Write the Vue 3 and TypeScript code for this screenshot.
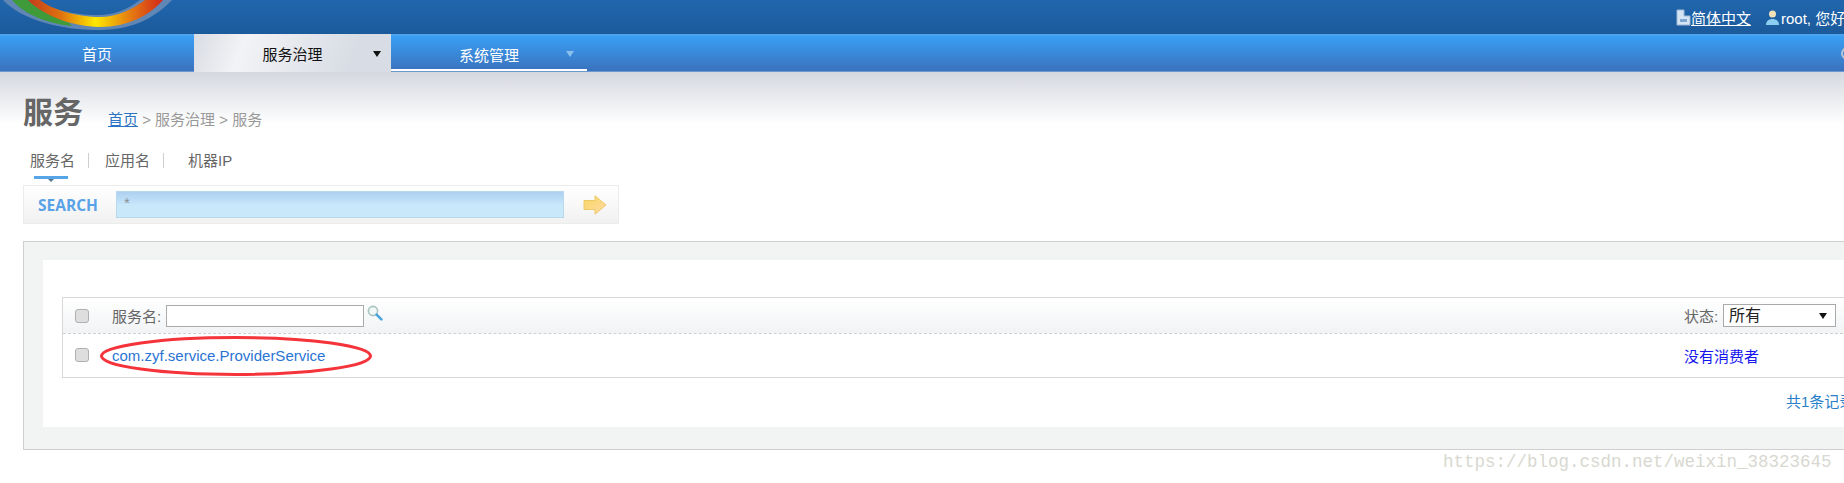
<template>
  <div class="page">
    <header class="top">
      <svg class="logo" width="180" height="32" viewBox="0 0 180 32">
        <defs>
          <linearGradient id="ringGrad" x1="0" x2="1" y1="0" y2="0">
            <stop offset="0" stop-color="#c23a1c" />
            <stop offset="0.25" stop-color="#e0740f" />
            <stop offset="0.5" stop-color="#fde800" />
            <stop offset="0.72" stop-color="#e88a10" />
            <stop offset="1" stop-color="#d2261a" />
          </linearGradient>
        </defs>
        <path d="M3 0C22 20 60 30 100 30C135 30 158 15 172 0H140C128 9 115 15 98 15C72 15 50 9 38 0Z" fill="#5f86b5" />
        <path d="M12 0C26 16 50 24 72 26L66 19C50 14 36 8 28 0Z" fill="#3f9a3a" />
        <path d="M28 0C40 13 70 27 100 27C128 27 150 15 163 0H145C132 10 116 17 100 17C78 17 52 10 40 0Z" fill="url(#ringGrad)" />
      </svg>
      <div class="top-links">
        <svg class="mini" width="15" height="17" viewBox="0 0 15 17">
          <path d="M1 1H8V7H14V16H1Z" fill="#d5e4f3" stroke="#9db9d8" />
          <path d="M4 10H11V13H4Z" fill="#7fa6d0" />
        </svg>
        <a class="lang">简体中文</a>
        <svg class="mini user" width="15" height="17" viewBox="0 0 15 17">
          <path d="M1 16C1 12 4 10 7.5 10S14 12 14 16Z" fill="#8ccdf2" />
          <circle cx="7.5" cy="5" r="3.5" fill="#f3e2b8" />
        </svg>
        <span>root, 您好</span>
      </div>
    </header>

    <nav class="nav">
      <a class="nav-item">首页</a>
      <a class="nav-item active">服务治理<i class="arrow"></i></a>
      <a class="nav-item system">系统管理<i class="arrow"></i></a>
      <span class="nav-dot"></span>
    </nav>

    <main class="content">
      <div class="title-row">
        <h1>服务</h1>
        <div class="crumbs"><a>首页</a> &gt; 服务治理 &gt; 服务</div>
      </div>

      <div class="tabs">
        <span class="tab current">服务名</span>
        <span class="sep"></span>
        <span class="tab">应用名</span>
        <span class="sep"></span>
        <span class="tab last">机器IP</span>
      </div>

      <div class="search">
        <span class="search-label">SEARCH</span>
        <div class="search-input">*</div>
        <svg class="go" width="24" height="20" viewBox="0 0 24 20">
          <defs>
            <linearGradient id="goGrad" x1="0" x2="0.8" y1="0" y2="1">
              <stop offset="0" stop-color="#f8d860" />
              <stop offset="1" stop-color="#ffd9a0" />
            </linearGradient>
          </defs>
          <path d="M1 5.5H12V0.8L23 10L12 19.2V14.5H1Z" fill="url(#goGrad)" stroke="#efc86a" />
        </svg>
      </div>

      <section class="panel">
        <div class="panel-inner">
          <div class="grid">
            <div class="row head">
              <span class="check"></span>
              <div class="cell-name">
                <label>服务名:</label>
                <span class="filter"></span>
                <svg class="lens" width="16" height="16" viewBox="0 0 16 16">
                  <circle cx="6" cy="6" r="4.6" fill="#f2f7f7" stroke="#a9c4c0" stroke-width="1.6" />
                  <path d="M9.6 9.6L14.4 14.4" stroke="#4aa5dc" stroke-width="2.6" stroke-linecap="round" />
                </svg>
              </div>
              <div class="cell-state">
                <label>状态:</label>
                <div class="select">所有<i class="select-arrow"></i></div>
              </div>
            </div>
            <div class="row body">
              <span class="check"></span>
              <div class="cell-name">
                <a class="service">com.zyf.service.ProviderService</a>
                <svg class="mark" width="274" height="42" viewBox="0 0 274 42">
                  <ellipse cx="137" cy="21" rx="134.5" ry="18.5" fill="none" stroke="#f5333a" stroke-width="3" />
                </svg>
              </div>
              <div class="cell-state"><a class="none">没有消费者</a></div>
            </div>
          </div>
          <div class="pager">共1条记录</div>
        </div>
      </section>
    </main>
    <div class="watermark">https://blog.csdn.net/weixin_38323645</div>
  </div>
</template>

<script setup lang="ts">
</script>

<style>
html,
body {
  margin: 0;
  overflow: hidden;
  background: #fff;
}
</style>

<style scoped>
.page {
  position: relative;
  width: 1900px;
  height: 483px;
  overflow: hidden;
  font-family: "Liberation Sans", "Noto Sans CJK SC", sans-serif;
  font-size: 15px;
  color: #666;
}

.top {
  position: relative;
  height: 34px;
  background: linear-gradient(#2166ad, #1b5a9b);
  color: #fff;
}

.logo {
  position: absolute;
  left: 0;
  top: 0;
}

.top-links {
  display: flex;
  align-items: center;
  height: 34px;
  padding-left: 1676px;
  white-space: nowrap;
}

.mini {
  flex: none;
}

.lang {
  width: 60px;
  text-decoration: underline;
}

.user {
  margin-left: 14px;
  margin-right: 1px;
}

.nav {
  position: relative;
  display: flex;
  height: 38px;
  box-sizing: border-box;
  border-top: 2px solid #4ba3ef;
  border-bottom: 1px solid #6d97cf;
  background: linear-gradient(#3a9ff5, #3a72bd);
  color: #fff;
}

.nav-item {
  position: relative;
  width: 197px;
  height: 37px;
  line-height: 37px;
  text-align: center;
  box-sizing: border-box;
}

.nav-item:first-child {
  width: 194px;
}

.nav-item.active {
  margin-top: -2px;
  height: 38px;
  line-height: 41px;
  background: linear-gradient(110deg, #d9dce3, #f2f3f6 25%, #d8dce4 80%);
  color: #111;
}

.nav-item.system {
  width: 196px;
  line-height: 39px;
  height: 35px;
  border-bottom: 2px solid #fff;
}

.arrow {
  position: absolute;
  left: 179px;
  top: 17px;
  border: 4px solid transparent;
  border-top: 6px solid #111;
  border-bottom: 0;
}

.system .arrow {
  left: 175px;
  top: 15px;
  border-top-color: #8cc0ee;
}

.nav-dot {
  position: absolute;
  left: 1841px;
  top: 11px;
  width: 9px;
  height: 9px;
  border: 2px solid #b7c4d3;
  border-radius: 50%;
}

.content {
  padding: 0 0 0 23px;
  background: linear-gradient(#d5d8df, #fff 52px) no-repeat;
}

.title-row {
  display: flex;
  align-items: flex-end;
  height: 60px;
}

h1 {
  margin: 0;
  width: 85px;
  font-size: 30px;
  line-height: 38px;
  color: #666;
}

.crumbs {
  line-height: 24px;
  color: #999;
}

.crumbs a {
  color: #2a74c4;
  text-decoration: underline;
}

.tabs {
  display: flex;
  align-items: center;
  height: 53px;
  padding: 0 0 0 7px;
  box-sizing: border-box;
  color: #666;
}

.tab {
  position: relative;
  width: 46px;
  height: 53px;
  line-height: 58px;
  white-space: nowrap;
}

.tab.current::after {
  content: "";
  position: absolute;
  left: 4px;
  top: 44px;
  width: 34px;
  height: 3px;
  background: #56a5e8;
}

.tab.current::before {
  content: "";
  position: absolute;
  left: 18px;
  top: 47px;
  border: 3px solid transparent;
  border-top: 3px solid #56758f;
  border-bottom: 0;
}

.tab.last {
  margin-left: 8px;
}

.sep {
  width: 1px;
  height: 15px;
  margin: 4px 16px 0 12px;
  background: #cfcfcf;
}

.search {
  display: flex;
  align-items: center;
  width: 596px;
  height: 39px;
  box-sizing: border-box;
  border: 1px solid #ececec;
  background: linear-gradient(#fff, #f1f1f1);
}

.search-label {
  width: 92px;
  padding-left: 14px;
  box-sizing: border-box;
  font-family: "Open Sans", sans-serif;
  font-weight: 700;
  font-size: 15.5px;
  color: #5aa2e6;
}

.search-input {
  width: 448px;
  height: 27px;
  padding: 2px 7px;
  box-sizing: border-box;
  border: 1px solid #b7d9ef;
  background: linear-gradient(#aed0f1, #c9e9fb 55%);
  color: #8a8f96;
}

.go {
  margin-left: 19px;
}

.panel {
  margin-top: 17px;
  height: 209px;
  box-sizing: border-box;
  padding: 18px 0 22px 19px;
  border: 1px solid #cfcfcf;
  background: #f2f4f4;
}

.panel-inner {
  height: 167px;
  padding: 37px 0 0 19px;
  box-sizing: border-box;
  background: #fff;
}

.grid {
  box-sizing: border-box;
  border: 1px solid #d8d8d8;
  height: 81px;
}

.row {
  display: flex;
  align-items: center;
}

.head {
  height: 36px;
  box-sizing: border-box;
  border-bottom: 1px dashed #cfcfcf;
  background: linear-gradient(#fff, #f1f3f5);
}

.body {
  height: 42px;
}

.check {
  flex: none;
  width: 14px;
  height: 14px;
  margin-left: 12px;
  box-sizing: border-box;
  border: 1px solid #b0b0b0;
  border-radius: 3px;
  background: #dedede;
}

.cell-name {
  position: relative;
  display: flex;
  align-items: center;
  width: 1595px;
  padding-left: 23px;
  box-sizing: border-box;
}

.cell-name label {
  width: 54px;
}

.filter {
  width: 198px;
  height: 22px;
  box-sizing: border-box;
  border: 1px solid #aaa;
  background: #fff;
}

.lens {
  margin: -6px 0 0 3px;
}

.service {
  color: #2a74d4;
}

.mark {
  position: absolute;
  left: 10px;
  top: -12px;
}

.cell-state {
  display: flex;
  align-items: center;
}

.cell-state label {
  width: 39px;
}

.select {
  position: relative;
  width: 113px;
  height: 23px;
  padding-left: 5px;
  box-sizing: border-box;
  border: 1px solid #aaa;
  background: #fff;
  color: #222;
  font-size: 16px;
  line-height: 22px;
}

.select-arrow {
  position: absolute;
  left: 95px;
  top: 8px;
  border: 4px solid transparent;
  border-top: 6px solid #111;
  border-bottom: 0;
}

.none {
  color: #1515ee;
}

.pager {
  margin: 12px 0 0 1724px;
  color: #2a80c8;
  white-space: nowrap;
}

.watermark {
  position: absolute;
  left: 1443px;
  top: 452px;
  font-family: "Liberation Mono", monospace;
  font-size: 17.5px;
  color: #d8d8d0;
  white-space: nowrap;
}
</style>
